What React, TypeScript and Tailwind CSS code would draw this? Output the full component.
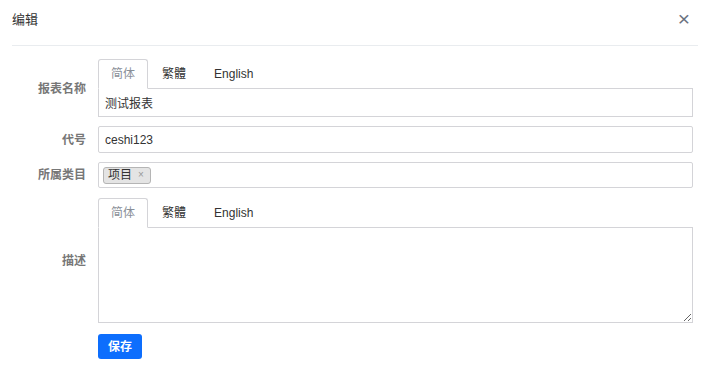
import React, { useState } from "react";

const LANGS = ["简体", "繁體", "English"];

const Tabs: React.FC<{ active: number; onChange: (i: number) => void }> = ({ active, onChange }) => (
  <div className="flex h-[30px] border-b border-[#d4d4d8]">
    {LANGS.map((l, i) => (
      <button
        key={l}
        onClick={() => onChange(i)}
        className={
          i === active
            ? "h-[30px] px-[12px] rounded-t-[3px] border border-[#d4d4d8] border-b-white bg-white text-[#8a8f98] text-[12px]"
            : "h-[29px] px-[13px] border border-transparent text-[#333] text-[12px]"
        }
      >
        {l}
      </button>
    ))}
  </div>
);

const App: React.FC = () => {
  const [nameTab, setNameTab] = useState(0);
  const [descTab, setDescTab] = useState(0);
  const [name, setName] = useState("测试报表");
  const [code, setCode] = useState("ceshi123");
  const [tags, setTags] = useState<string[]>(["项目"]);

  return (
    <div className="w-[710px] h-[379px] bg-white text-[12px] text-[#333] font-['Liberation_Sans','Noto_Sans_CJK_SC',sans-serif]">
      <div className="mx-[12px] h-[46px] flex items-center justify-between border-b border-[#e9ecef]">
        <span className="text-[13px] text-[#333] mt-[-6px]">编辑</span>
        <button className="text-[#6b7280] text-[21px] leading-none mr-[8px] mt-[-9px]">×</button>
      </div>

      <div className="pl-[12px] pr-[17px] pt-[13px] flex flex-col">
        <div className="flex">
          <label className="w-[74px] text-right self-center font-bold text-[#777] mt-[2px]">报表名称</label>
          <div className="ml-[12px] flex-1">
            <Tabs active={nameTab} onChange={setNameTab} />
            <input
              value={name}
              onChange={(e) => setName(e.target.value)}
              className="w-full h-[28px] px-[6px] border border-[#d4d4d8] border-t-0 outline-none text-[12px] text-[#333]"
            />
          </div>
        </div>

        <div className="flex mt-[9px] items-center">
          <label className="w-[74px] text-right font-bold text-[#777]">代号</label>
          <input
            value={code}
            onChange={(e) => setCode(e.target.value)}
            className="ml-[12px] flex-1 h-[27px] px-[6px] border border-[#d4d4d8] rounded-[2px] outline-none text-[12px] text-[#333]"
          />
        </div>

        <div className="flex mt-[9px] items-center">
          <label className="w-[74px] text-right font-bold text-[#777]">所属类目</label>
          <div className="ml-[12px] flex-1 h-[26px] px-[4px] border border-[#d4d4d8] rounded-[2px] flex items-center gap-1">
            {tags.map((t) => (
              <span
                key={t}
                className="h-[17px] flex items-center gap-[6px] pl-[4px] pr-[6px] bg-[#e4e4e4] border border-[#b5b5b5] rounded-[3px] text-[12px] text-[#333] leading-none"
              >
                {t}
                <button
                  onClick={() => setTags(tags.filter((x) => x !== t))}
                  className="text-[#999] text-[10px] leading-none"
                >
                  ×
                </button>
              </span>
            ))}
          </div>
        </div>

        <div className="flex mt-[10px]">
          <label className="w-[74px] text-right self-center font-bold text-[#777]">描述</label>
          <div className="ml-[12px] flex-1">
            <Tabs active={descTab} onChange={setDescTab} />
            <textarea className="block w-full h-[95px] px-[6px] py-[4px] border border-[#d4d4d8] border-t-0 outline-none text-[12px] text-[#333]" />
          </div>
        </div>

        <div className="flex mt-[11px]">
          <div className="w-[74px]" />
          <button className="ml-[12px] h-[25px] px-[10px] rounded-[3px] bg-[#0d6efd] text-white text-[12px] font-bold">
            保存
          </button>
        </div>
      </div>
    </div>
  );
};

export default App;
